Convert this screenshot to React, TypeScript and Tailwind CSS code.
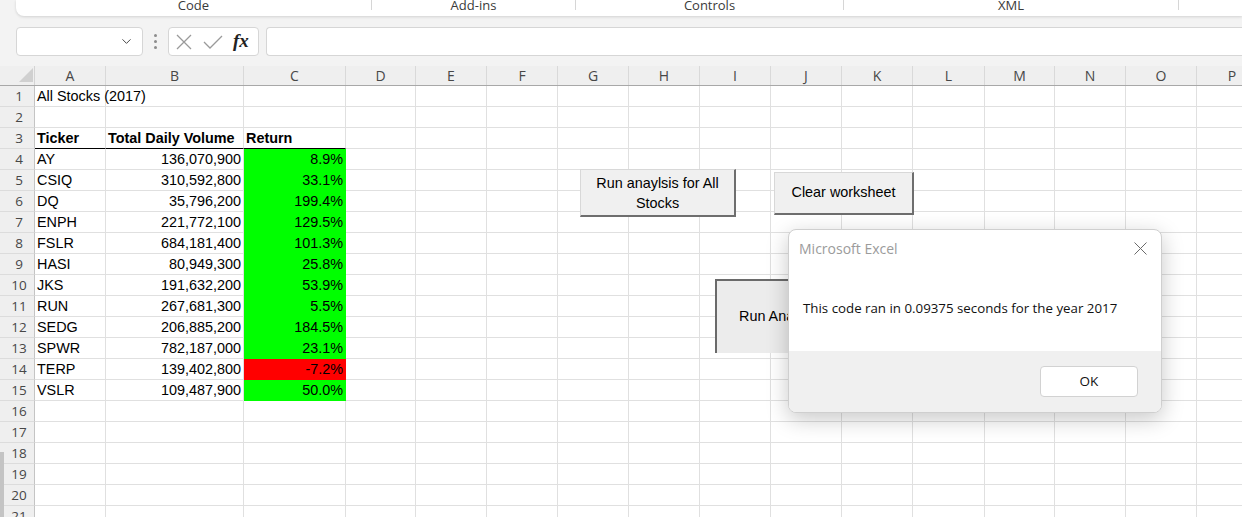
import { ChevronDown } from "lucide-react";
import clsx from "clsx";

type Stock = [string, string, string, boolean];

const STOCKS: Stock[] = [
  ["AY", "136,070,900", "8.9%", true],
  ["CSIQ", "310,592,800", "33.1%", true],
  ["DQ", "35,796,200", "199.4%", true],
  ["ENPH", "221,772,100", "129.5%", true],
  ["FSLR", "684,181,400", "101.3%", true],
  ["HASI", "80,949,300", "25.8%", true],
  ["JKS", "191,632,200", "53.9%", true],
  ["RUN", "267,681,300", "5.5%", true],
  ["SEDG", "206,885,200", "184.5%", true],
  ["SPWR", "782,187,000", "23.1%", true],
  ["TERP", "139,402,800", "-7.2%", false],
  ["VSLR", "109,487,900", "50.0%", true],
];

// columns right of C, nothing in them
const REST_COLS = [
  { l: "D", w: "w-[70px]" },
  { l: "E", w: "w-[71px]" },
  { l: "F", w: "w-[71px]" },
  { l: "G", w: "w-[71px]" },
  { l: "H", w: "w-[71px]" },
  { l: "I", w: "w-[71px]" },
  { l: "J", w: "w-[71px]" },
  { l: "K", w: "w-[71px]" },
  { l: "L", w: "w-[72px]" },
  { l: "M", w: "w-[70px]" },
  { l: "N", w: "w-[71px]" },
  { l: "O", w: "w-[71px]" },
  { l: "P", w: "w-[71px]" },
];

const ROW_COUNT = 21;

function Ribbon() {
  const sep = <div className="w-px h-[10px] bg-[#d6d6d6] shrink-0" />;
  return (
    <div className="h-[17px] pl-[16px]">
      <div className="h-[16px] bg-white rounded-bl-[8px] shadow-[0_1px_3px_rgba(0,0,0,0.14)] flex items-start font-['Open_Sans',sans-serif] text-[13px] leading-none text-[#3a3a3a]">
        <div className="w-[355px] shrink-0 flex justify-center -mt-[1px]">Code</div>
        {sep}
        <div className="w-[203px] shrink-0 flex justify-center -mt-[1px]">Add-ins</div>
        {sep}
        <div className="w-[267px] shrink-0 flex justify-center -mt-[1px]">Controls</div>
        {sep}
        <div className="w-[334px] shrink-0 flex justify-center -mt-[1px]">XML</div>
        {sep}
      </div>
    </div>
  );
}

function FormulaBar() {
  return (
    <div className="mt-[10px] h-[29px] flex pl-[16px]">
      <div className="w-[127px] shrink-0 bg-white border border-[#d6d6d6] rounded-[4px] flex items-center justify-end pr-[8px]">
        <ChevronDown size={15} strokeWidth={1.5} className="text-[#3c3c3c]" />
      </div>
      <div className="w-[25px] shrink-0 flex flex-col items-center justify-center gap-[3px]">
        <div className="w-[3px] h-[3px] rounded-full bg-[#8c8c8c]" />
        <div className="w-[3px] h-[3px] rounded-full bg-[#8c8c8c]" />
        <div className="w-[3px] h-[3px] rounded-full bg-[#8c8c8c]" />
      </div>
      <div className="w-[91px] shrink-0 bg-white border border-[#d6d6d6] rounded-[4px] flex items-center pl-[6px]">
        <svg width="18" height="18" viewBox="0 0 18 18" className="shrink-0">
          <path d="M2 2 L16 16 M16 2 L2 16" stroke="#9a9a9a" strokeWidth="1.3" fill="none" />
        </svg>
        <svg width="20" height="18" viewBox="0 0 20 18" className="shrink-0 ml-[10px]">
          <path d="M1 9 L7 15 L19 3" stroke="#9a9a9a" strokeWidth="1.3" fill="none" />
        </svg>
        <span className="ml-[10px] font-['Liberation_Serif',serif] italic font-bold text-[19px] leading-none text-[#222] -mt-[2px]">
          fx
        </span>
      </div>
      <div className="ml-[7px] flex-1 bg-white border border-r-0 border-[#d6d6d6] rounded-l-[4px]" />
    </div>
  );
}

function HeaderRow() {
  return (
    <div className="h-[20px] flex bg-[#efefef] border-b border-[#a8a8a8] font-['Open_Sans',sans-serif] text-[14px] text-[#474747] leading-[19px]">
      <div className="w-[35px] shrink-0 border-r border-[#d4d4d4] relative">
        <svg width="35" height="19" viewBox="0 0 35 19" className="absolute inset-0">
          <polygon points="33,2 33,16 19,16" fill="#d0d0d0" />
        </svg>
      </div>
      <div className="w-[71px] shrink-0 border-r border-[#d9d9d9] text-center">A</div>
      <div className="w-[138px] shrink-0 border-r border-[#d9d9d9] text-center">B</div>
      <div className="w-[102px] shrink-0 border-r border-[#d9d9d9] text-center">C</div>
      {REST_COLS.map((c) => (
        <div key={c.l} className={clsx("shrink-0 border-r border-[#d9d9d9] text-center", c.w)}>
          {c.l}
        </div>
      ))}
    </div>
  );
}

function Row({ n }: { n: number }) {
  const stock = n >= 4 && n <= 15 ? STOCKS[n - 4] : null;
  const headerRow = n === 3;
  const grid = "border-r border-b border-[#e0e0e0]";
  const bottom = headerRow ? "border-b-black" : "";

  let a: string = "";
  if (n === 1) a = "All Stocks (2017)";
  if (headerRow) a = "Ticker";
  if (stock) a = stock[0];

  return (
    <div className="h-[21px] flex">
      <div className="w-[35px] shrink-0 bg-[#efefef] border-r border-r-[#c4c4c4] border-b border-b-[#dcdcdc] pl-[4px] text-center font-['Open_Sans',sans-serif] text-[13.5px] text-[#474747] leading-[20px]">
        {n}
      </div>
      <div
        className={clsx(
          "w-[71px] shrink-0 pl-[2px] whitespace-nowrap leading-[21px]",
          grid,
          bottom,
          headerRow && "font-bold"
        )}
      >
        {a}
      </div>
      <div
        className={clsx(
          "w-[138px] shrink-0 px-[2px] whitespace-nowrap leading-[21px]",
          grid,
          bottom,
          headerRow ? "font-bold text-left" : "text-right"
        )}
      >
        {headerRow ? "Total Daily Volume" : stock ? stock[1] : ""}
      </div>
      <div
        className={clsx(
          "w-[102px] shrink-0 px-[2px] whitespace-nowrap leading-[21px]",
          stock
            ? stock[3]
              ? "bg-[#00ff00] border-r border-b border-[#00ff00] text-right"
              : "bg-[#ff0000] border-r border-b border-[#ff0000] text-right"
            : grid,
          bottom,
          headerRow && "font-bold"
        )}
      >
        {headerRow ? "Return" : stock ? stock[2] : ""}
      </div>
      {REST_COLS.map((c) => (
        <div key={c.l} className={clsx("shrink-0", grid, c.w)} />
      ))}
    </div>
  );
}

function Dialog() {
  return (
    <div className="absolute left-[788px] top-[229px] w-[374px] h-[184px] bg-white rounded-[8px] border border-[#cfcfcf] shadow-[0_6px_22px_rgba(0,0,0,0.22)] overflow-hidden flex flex-col font-['Open_Sans',sans-serif]">
      <div className="h-[37px] shrink-0 flex items-center justify-between pl-[10px] pr-[14px]">
        <span className="text-[14px] text-[#9b9b9b]">Microsoft Excel</span>
        <svg width="13" height="13" viewBox="0 0 13 13">
          <path d="M0.5 0.5 L12.5 12.5 M12.5 0.5 L0.5 12.5" stroke="#6a6a6a" strokeWidth="1" fill="none" />
        </svg>
      </div>
      <div className="flex-1 flex items-center pl-[14px] text-[13.3px] text-[#111]">
        This code ran in 0.09375 seconds for the year 2017
      </div>
      <div className="h-[61px] shrink-0 bg-[#f0f0f0] flex justify-end items-start pt-[15px] pr-[23px]">
        <div className="w-[98px] h-[31px] bg-white border border-[#d2d2d2] rounded-[4px] flex items-center justify-center text-[13.5px] text-[#111]">
          OK
        </div>
      </div>
    </div>
  );
}

export default function App() {
  return (
    <div className="relative w-[1242px] h-[517px] overflow-hidden bg-[#f3f3f3] font-['Liberation_Sans',Arial,sans-serif] text-[14.4px] text-black">
      <Ribbon />
      <FormulaBar />
      <div className="mt-[10px]">
        <HeaderRow />
        <div className="bg-white">
          {Array.from({ length: ROW_COUNT }, (_, i) => (
            <Row key={i} n={i + 1} />
          ))}
        </div>
      </div>

      {/* sheet buttons */}
      <div className="absolute left-[580px] top-[169px] w-[156px] h-[48px] bg-[#f0f0f0] border-t border-l border-t-[#d8d8d8] border-l-[#d8d8d8] border-r-2 border-b-2 border-r-[#6e6e6e] border-b-[#6e6e6e] flex items-center justify-center text-center leading-[20px]">
        Run anaylsis for All
        <br />
        Stocks
      </div>
      <div className="absolute left-[774px] top-[172px] w-[140px] h-[43px] bg-[#f0f0f0] border-t border-l border-t-[#d8d8d8] border-l-[#d8d8d8] border-r-2 border-b-2 border-r-[#6e6e6e] border-b-[#6e6e6e] flex items-center justify-center">
        Clear worksheet
      </div>
      <div className="absolute left-[715px] top-[279px] w-[190px] h-[74px] bg-[#ececec] border-t-2 border-l-2 border-[#6a6a6a] flex items-center pl-[22px] whitespace-nowrap">
        Run Analysis for 2018
      </div>

      <Dialog />

      <div className="absolute left-0 top-[452px] w-[4px] h-[65px] bg-[#c4c4c4]" />
    </div>
  );
}
